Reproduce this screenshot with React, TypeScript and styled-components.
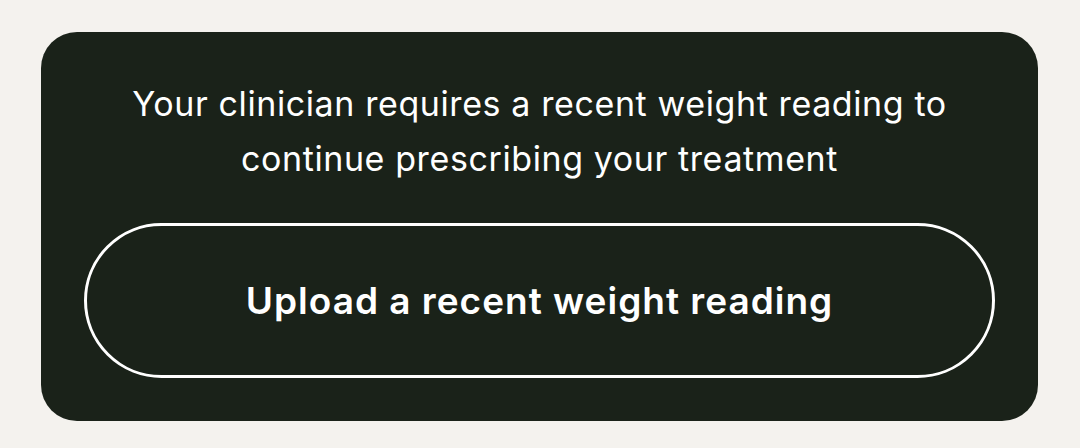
import React from "react";
import styled, { createGlobalStyle } from "styled-components";

const GlobalStyle = createGlobalStyle`
  html, body {
    margin: 0;
    padding: 0;
    background: #f4f2ee;
  }
  body {
    font-family: Inter, "Noto Sans", sans-serif;
    -webkit-font-smoothing: antialiased;
  }
`;

const Page = styled.div`
  width: 1080px;
  height: 448px;
  padding: 32px 42px 27px 41px;
  box-sizing: border-box;
`;

const Card = styled.section`
  height: 100%;
  background: #1a2219;
  border-radius: 36px;
  display: flex;
  flex-direction: column;
  align-items: center;
  padding: 44px 43px 43px;
  box-sizing: border-box;
`;

const Message = styled.p`
  margin: 0;
  color: #ffffff;
  font-size: 34px;
  line-height: 55px;
  font-weight: 400;
  text-align: center;
  letter-spacing: 0.6px;
`;

const UploadButton = styled.button`
  margin-top: auto;
  width: 100%;
  height: 155px;
  background: transparent;
  border: 3px solid #ffffff;
  border-radius: 999px;
  color: #ffffff;
  font-family: Inter, "Noto Sans", sans-serif;
  font-size: 37px;
  font-weight: 600;
  letter-spacing: 1px;
  cursor: pointer;
`;

export default function App() {
  return (
    <>
      <GlobalStyle />
      <Page>
        <Card>
          <Message>
            Your clinician requires a recent weight reading to
            <br />
            continue prescribing your treatment
          </Message>
          <UploadButton>Upload a recent weight reading</UploadButton>
        </Card>
      </Page>
    </>
  );
}
